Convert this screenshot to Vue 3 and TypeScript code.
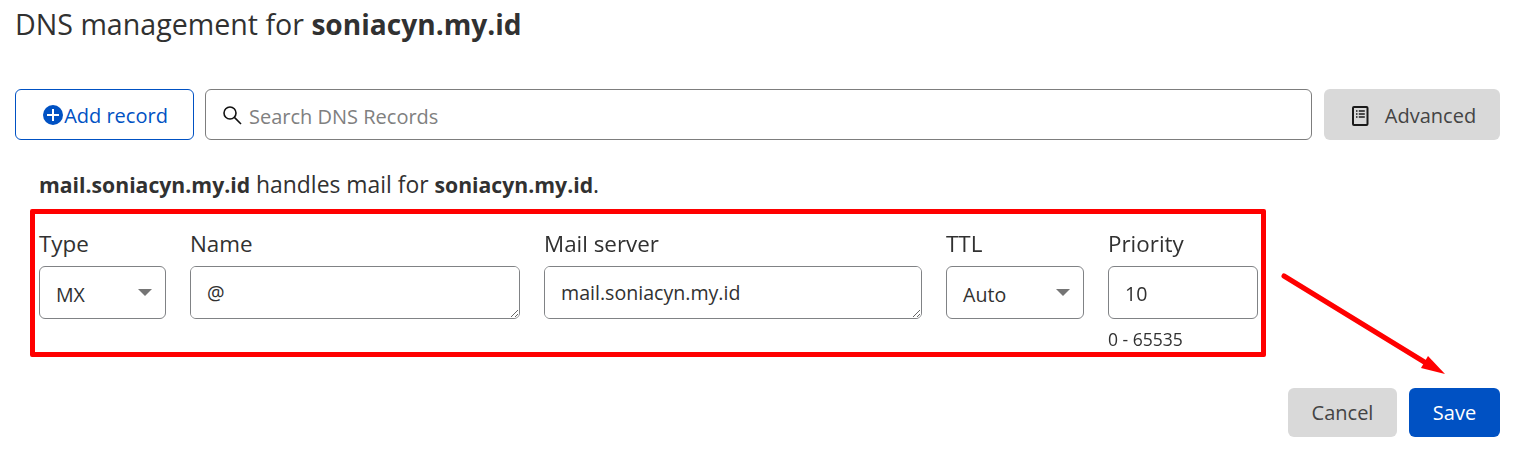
<template>
  <div class="page">
    <h1 class="title">DNS management for <b>soniacyn.my.id</b></h1>

    <div class="toolbar">
      <button class="btn-add" type="button">
        <svg class="plus" width="20" height="20" viewBox="0 0 20 20">
          <circle cx="10" cy="10" r="10" fill="#0051c3" />
          <path d="M10 4v12M4 10h12" stroke="#fff" stroke-width="2" />
        </svg>
        <span>Add record</span>
      </button>
      <div class="search">
        <svg width="22" height="22" viewBox="0 0 22 22" fill="none" stroke="#111" stroke-width="1.6">
          <circle cx="9" cy="9" r="6" />
          <path d="M13.4 13.4 20 20" />
        </svg>
        <input type="text" placeholder="Search DNS Records" />
      </div>
      <button class="btn-advanced" type="button">
        <svg width="17" height="20" viewBox="0 0 17 20" fill="none" stroke="#1a1a1a">
          <rect x="1" y="1" width="14.5" height="18" rx="1" stroke-width="2" />
          <path d="M4 5h1.5M6.8 5h6M4 8h1.5M6.8 8h6M4 11h1.5M6.8 11h6" stroke-width="1.3" />
        </svg>
        <span>Advanced</span>
      </button>
    </div>

    <p class="summary"><b>mail.soniacyn.my.id</b> handles mail for <b>soniacyn.my.id</b>.</p>

    <div class="form">
      <div class="highlight"></div>
      <div class="fields">
        <div v-for="f in fields" :key="f.label" class="field" :style="{ width: f.width + 'px' }">
          <label>{{ f.label }}</label>
          <div v-if="f.kind === 'select'" class="select">
            <span>{{ f.value }}</span>
            <i class="caret"></i>
          </div>
          <textarea v-else-if="f.kind === 'area'" :value="f.value" spellcheck="false"></textarea>
          <input v-else type="text" :value="f.value" />
          <small v-if="f.hint">{{ f.hint }}</small>
        </div>
      </div>

      <svg class="arrow" width="180" height="120" viewBox="0 0 180 120">
        <path d="M4 5 146 92" stroke="#f00" stroke-width="5" stroke-linecap="round" fill="none" />
        <path d="M165 103 141 97 148 85Z" fill="#f00" />
      </svg>

      <div class="actions">
        <button class="btn-cancel" type="button">Cancel</button>
        <button class="btn-save" type="button">Save</button>
      </div>
    </div>
  </div>
</template>

<script setup lang="ts">
interface Field {
  label: string
  width: number
  kind: 'select' | 'area' | 'input'
  value: string
  hint?: string
}

const fields: Field[] = [
  { label: 'Type', width: 127, kind: 'select', value: 'MX' },
  { label: 'Name', width: 330, kind: 'area', value: '@' },
  { label: 'Mail server', width: 378, kind: 'area', value: 'mail.soniacyn.my.id' },
  { label: 'TTL', width: 138, kind: 'select', value: 'Auto' },
  { label: 'Priority', width: 150, kind: 'input', value: '10', hint: '0 - 65535' },
]
</script>

<style>
html,
body {
  margin: 0;
  background: #fff;
}
</style>

<style scoped>
.page {
  width: 1515px;
  height: 455px;
  box-sizing: border-box;
  padding: 5px 15px 0;
  overflow: hidden;
  font-family: "Open Sans", "Noto Sans", sans-serif;
  color: #313131;
}

.title {
  margin: 0 0 46px;
  font-size: 28.6px;
  line-height: 38px;
  font-weight: 400;
}

.title b {
  font-size: 28.1px;
  font-weight: 700;
}

.toolbar {
  display: flex;
  gap: 11px;
  height: 51px;
}

.toolbar button {
  font: inherit;
  font-size: 20px;
  border-radius: 6px;
  display: flex;
  align-items: center;
  justify-content: center;
}

.btn-add {
  width: 179px;
  background: #fff;
  border: 1px solid #0051c3;
  color: #0051c3;
  padding: 2px 0 0 2px;
}

.btn-add span {
  margin-left: 1px;
}

.btn-add .plus {
  margin-top: -2px;
}

.btn-advanced {
  width: 176px;
  margin-left: 1px;
  gap: 16px;
  background: #d9d9d9;
  border: none;
  color: #444;
  padding: 2px 0 0 4px;
}

.search {
  flex: 1;
  display: flex;
  align-items: center;
  gap: 6px;
  padding-left: 15px;
  border: 1px solid #7d7d7d;
  border-radius: 6px;
}

.search input {
  flex: 1;
  border: none;
  outline: none;
  font: inherit;
  font-size: 20px;
  color: #313131;
  padding: 3px 0 0;
}

.search input::placeholder {
  color: #808080;
  opacity: 1;
}

.summary {
  margin: 28px 0 0 24px;
  font-size: 22.9px;
  line-height: 33px;
}

.summary b {
  font-size: 21.2px;
}

.form {
  position: relative;
}

.highlight {
  position: absolute;
  left: 15px;
  top: 8px;
  width: 1236px;
  height: 148px;
  box-sizing: border-box;
  border: 5px solid #f00;
  border-radius: 2px;
}

.arrow {
  position: absolute;
  left: 1265px;
  top: 70px;
}

.fields {
  display: flex;
  gap: 24px;
  padding: 29px 0 0 24px;
}

.field {
  position: relative;
  display: flex;
  flex-direction: column;
}

.field label {
  font-size: 22.4px;
  line-height: 28px;
  margin-bottom: 8px;
}

.select,
.field textarea,
.field input {
  box-sizing: border-box;
  flex: none;
  width: 100%;
  height: 53px;
  border: 1px solid #808285;
  border-radius: 6px;
  background: #fff;
  font: inherit;
  font-size: 19.6px;
  color: #313131;
  margin: 0;
  outline: none;
}

.select {
  position: relative;
  display: flex;
  align-items: center;
  padding: 3px 0 0 16px;
}

.caret {
  position: absolute;
  right: 13px;
  top: 22px;
  border-left: 7.5px solid transparent;
  border-right: 7.5px solid transparent;
  border-top: 7.5px solid #757575;
}

.field textarea {
  padding: 13px 16px;
  line-height: 26px;
  resize: both;
  display: block;
}

.field input {
  padding: 2px 16px 0;
}

.field small {
  font-size: 17.5px;
  line-height: 22px;
  margin-top: 9px;
}

.actions {
  display: flex;
  justify-content: flex-end;
  gap: 12px;
  margin-top: 38px;
}

.actions button {
  height: 49px;
  border: none;
  border-radius: 6px;
  font: inherit;
  font-size: 20px;
  padding: 0;
}

.btn-cancel {
  width: 109px;
  background: #d9d9d9;
  color: #444;
}

.btn-save {
  width: 91px;
  background: #0051c3;
  color: #fff;
}
</style>
